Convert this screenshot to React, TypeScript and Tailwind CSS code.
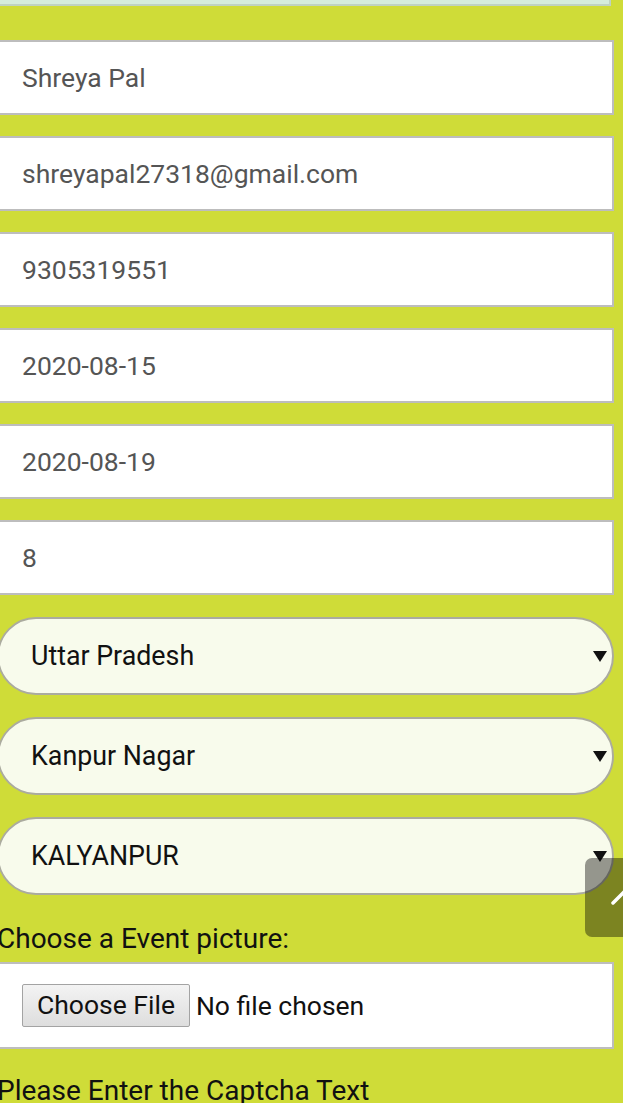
import React from "react";

const fields = [
  "Shreya Pal",
  "shreyapal27318@gmail.com",
  "9305319551",
  "2020-08-15",
  "2020-08-19",
  "8",
];

const places = ["Uttar Pradesh", "Kanpur Nagar", "KALYANPUR"];

const Arrow = () => (
  <svg width="14" height="11" viewBox="0 0 14 11" className="shrink-0">
    <polygon points="0,0 14,0 7,11" fill="#111" />
  </svg>
);

export default function App() {
  return (
    <div
      className="relative min-h-[1103px] w-full overflow-hidden bg-[#cfdc38]"
      style={{ fontFamily: "Roboto, 'Noto Sans', Arial, sans-serif" }}
    >
      <div className="-ml-[3px] flex w-[617px] flex-col">
        {/* strip left over from the block above */}
        <div className="h-[6px] w-[614px] border-r-2 border-b-2 border-[#bfd2c2] bg-[#d5ecdc]" />

        {/* text fields */}
        <div className="mt-[34px] flex flex-col gap-[21px]">
          {fields.map((v) => (
            <input
              key={v}
              readOnly
              value={v}
              className="h-[75px] w-full border-2 border-[#bdbdbd] bg-white pl-[23px] text-[26.5px] text-[#555] outline-none"
            />
          ))}
        </div>

        {/* dropdowns */}
        <div className="mt-[22px] flex flex-col gap-[22px]">
          {places.map((p) => (
            <div
              key={p}
              className="flex h-[78px] w-full items-center justify-between rounded-full border-2 border-[#abab9f] bg-[#f8fbec] pr-[5px] pl-[32px]"
            >
              <span className="text-[26.8px] text-[#111]">{p}</span>
              <Arrow />
            </div>
          ))}
        </div>

        <label className="mt-[28px] text-[28px] leading-[32px] whitespace-nowrap text-[#111]">
          Choose a Event picture:
        </label>

        <div className="mt-[7px] flex h-[87px] w-full items-center border-2 border-[#bdbdbd] bg-white pl-[23px]">
          <button className="h-[43px] rounded-[2px] border border-[#a3a3a3] bg-gradient-to-b from-[#f3f3f3] to-[#dedede] px-[14px] text-[26.5px] leading-none text-[#111]">
            Choose File
          </button>
          <span className="ml-[6px] text-[26.5px] text-[#111]">No file chosen</span>
        </div>

        <p className="mt-[26px] text-[28px] leading-[32px] whitespace-nowrap text-[#111]">
          Please Enter the Captcha Text
        </p>
      </div>

      {/* back to top */}
      <button className="absolute top-[858px] left-[585px] flex h-[79px] w-[80px] items-center justify-center rounded-[7px] bg-black/40">
        <svg width="30" height="20" viewBox="0 0 30 20" className="mt-[-4px]">
          <polyline
            points="3,17 15,5 27,17"
            fill="none"
            stroke="#fff"
            strokeWidth="3.5"
            strokeLinecap="round"
          />
        </svg>
      </button>
    </div>
  );
}
